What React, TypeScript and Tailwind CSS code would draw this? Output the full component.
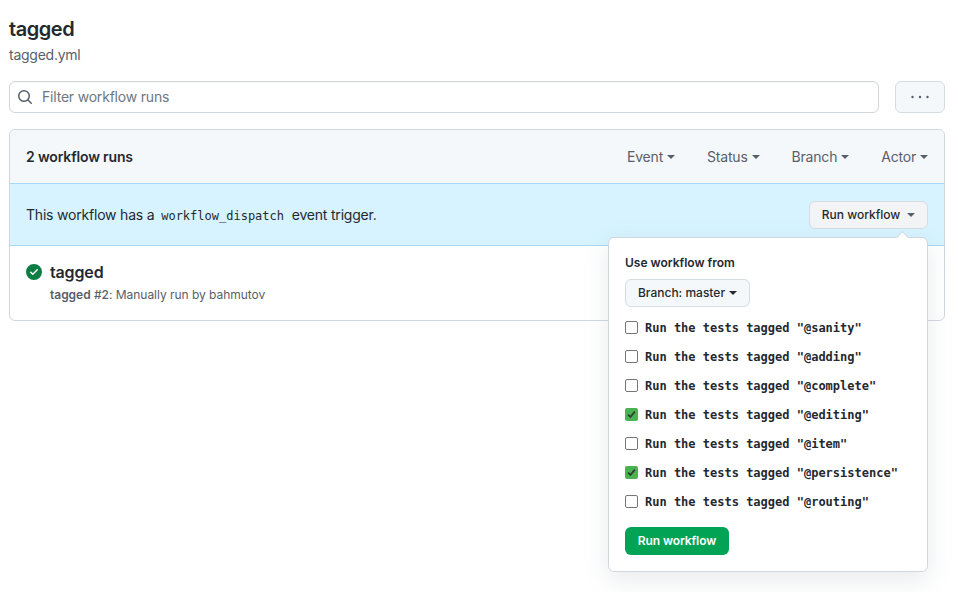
import React from "react";

const sans = "font-['Inter','Noto_Sans',sans-serif]";
const mono = "font-['DejaVu_Sans_Mono','Liberation_Mono',monospace]";

function Caret({ className = "" }: { className?: string }) {
  return <span className={`inline-block w-0 h-0 border-x-4 border-x-transparent border-t-4 border-t-current ${className}`} />;
}

function Filter({ label }: { label: string }) {
  return (
    <span className="flex items-center gap-1 text-[14px] tracking-[-0.2px] text-[#57606a]">
      {label}
      <Caret />
    </span>
  );
}

function Check({ label, checked }: { label: string; checked?: boolean }) {
  return (
    <label className="flex items-center h-[29px] gap-[7px]">
      {checked ? (
        <span className="w-[13px] h-[13px] rounded-[2px] bg-[#4bb254] flex items-center justify-center">
          <svg width="11" height="11" viewBox="0 0 11 11" fill="none">
            <path d="M2 5.6 L4.4 8 L8.8 2.6" stroke="#2f3b33" strokeWidth="1.8" />
          </svg>
        </span>
      ) : (
        <span className="w-[13px] h-[13px] rounded-[2px] border border-[#767676] bg-white" />
      )}
      <span className={`${mono} text-[12px] font-bold text-[#24292f] whitespace-pre`}>{label}</span>
    </label>
  );
}

export default function App() {
  const tags = [
    ["@sanity", false],
    ["@adding", false],
    ["@complete", false],
    ["@editing", true],
    ["@item", false],
    ["@persistence", true],
    ["@routing", false],
  ] as const;
  return (
    <div className={`${sans} w-[960px] h-[592px] overflow-hidden bg-white pl-[9px] pr-[15px] pt-[17px] text-[#24292f]`}>
      <h1 className="text-[20px] leading-[24px] font-semibold tracking-[-0.45px]">tagged</h1>
      <p className="mt-[3px] text-[14px] leading-[21px] tracking-[-0.25px] text-[#57606a]">tagged.yml</p>

      <div className="mt-4 flex gap-4">
        <div className="flex-1 h-8 flex items-center gap-[9px] pl-[7px] rounded-md border border-[#d0d7de] bg-white shadow-[inset_0_1px_0_rgba(208,215,222,0.2)]">
          <svg width="16" height="16" viewBox="0 0 16 16" fill="#57606a">
            <path d="M10.68 11.74a6 6 0 0 1-7.922-8.982 6 6 0 0 1 8.982 7.922l3.04 3.04a.749.749 0 0 1-.326 1.275.749.749 0 0 1-.734-.215ZM11.5 7a4.499 4.499 0 1 0-8.997 0A4.499 4.499 0 0 0 11.5 7Z" />
          </svg>
          <span className="pb-[2px] text-[14px] tracking-[-0.2px] text-[#6e7781]">Filter workflow runs</span>
        </div>
        <div className="w-[50px] h-8 flex items-center justify-center rounded-md border border-[#d5dbe1] bg-[#f5f8fb]">
          <svg width="18" height="16" viewBox="0 0 18 16" fill="#57606a">
            <circle cx="1.5" cy="8" r="1.2" />
            <circle cx="9" cy="8" r="1.2" />
            <circle cx="16.5" cy="8" r="1.2" />
          </svg>
        </div>
      </div>

      <div className="relative mt-4 rounded-md border border-[#d0d7de]">
        <div className="h-[53px] flex items-center justify-between pl-4 pr-4 bg-[#f5f8fb] rounded-t-md">
          <span className="text-[14px] font-semibold tracking-[-0.15px]">2 workflow runs</span>
          <div className="flex items-center gap-8">
            <Filter label="Event" />
            <Filter label="Status" />
            <Filter label="Branch" />
            <Filter label="Actor" />
          </div>
        </div>
        <div className="h-[63px] flex items-center justify-between pl-4 pr-4 bg-[#d6f3ff] border-y border-[#a5d9f5]">
          <span className="text-[14px] tracking-[-0.2px] whitespace-pre">
            This workflow has a <code className={`${mono} text-[12px] tracking-normal pl-[3px] pr-[4px]`}>workflow_dispatch</code> event trigger.
          </span>
          <div className="h-7 w-[119px] flex items-center justify-center gap-[7px] rounded-md border border-[#d5dbe1] bg-[#f3f4f6] text-[12px] font-medium">
            Run workflow
            <Caret className="text-[#57606a]" />
          </div>
        </div>
        <div className="h-[74px] pl-4 pt-[14px] flex gap-2">
          <svg width="16" height="16" viewBox="0 0 16 16" fill="#0c7d43" className="mt-[4px]">
            <path d="M8 16A8 8 0 1 1 8 0a8 8 0 0 1 0 16Zm3.78-9.72a.751.751 0 0 0-.018-1.042.751.751 0 0 0-1.042-.018L6.75 9.19 5.28 7.72a.751.751 0 0 0-1.042.018.751.751 0 0 0-.018 1.042l2 2a.75.75 0 0 0 1.06 0Z" />
          </svg>
          <div>
            <div className="text-[16px] leading-[24px] font-semibold tracking-[-0.15px]">tagged</div>
            <div className="mt-[2px] text-[12px] leading-[18px] tracking-[-0.03px] text-[#57606a]">
              <span className="font-semibold">tagged</span> <span className="font-medium">#2</span>: Manually run by bahmutov
            </div>
          </div>
        </div>

        <div className="absolute left-[598px] top-[107px] w-[320px] h-[335px] rounded-md border border-[#d0d7de] bg-white pt-4 pl-4 shadow-[0_8px_24px_rgba(140,149,159,0.2)]">
          <span className="absolute right-[20px] -top-[5px] w-[9px] h-[9px] rotate-45 bg-white border-l border-t border-[#d0d7de]" />
          <div className="text-[12px] leading-[18px] font-semibold">Use workflow from</div>
          <div className="mt-[7px] h-7 w-[125px] flex items-center justify-center gap-1 rounded-md border border-[#d5dbe1] bg-[#f5f8fb] text-[12px] font-medium">
            Branch: master
            <Caret />
          </div>
          <div className="mt-[6px] flex flex-col">
            {tags.map(([t, c]) => (
              <Check key={t} label={`Run the tests tagged "${t}"`} checked={c} />
            ))}
          </div>
          <div className="mt-[11px] h-7 w-[104px] flex items-center justify-center rounded-md bg-[#03a356] text-white text-[12px] font-semibold tracking-[-0.1px]">
            Run workflow
          </div>
        </div>
      </div>
    </div>
  );
}
